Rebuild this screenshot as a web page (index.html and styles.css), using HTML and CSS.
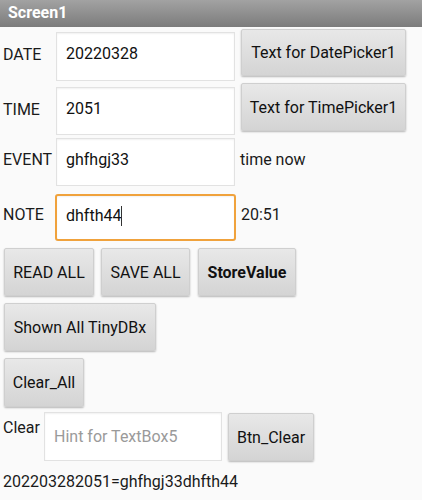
FILE: index.html
```html
<!DOCTYPE html>
<html>
<head>
<meta charset="utf-8">
<link rel="stylesheet" href="styles.css">
</head>
<body>
<div class="titlebar">Screen1</div>
<div class="screen">
  <div class="row row-date">
    <div class="label">DATE</div>
    <div class="textbox">20220328</div>
    <div class="button btn-picker">Text for DatePicker1</div>
  </div>
  <div class="row row-time">
    <div class="label">TIME</div>
    <div class="textbox">2051</div>
    <div class="button btn-picker">Text for TimePicker1</div>
  </div>
  <div class="row row-event">
    <div class="label">EVENT</div>
    <div class="textbox">ghfhgj33</div>
    <div class="side">time now</div>
  </div>
  <div class="row row-note">
    <div class="label">NOTE</div>
    <div class="textbox focused">dhfth44<span class="caret"></span></div>
    <div class="side">20:51</div>
  </div>
  <div class="row row-actions">
    <div class="button btn-read">READ ALL</div>
    <div class="button btn-save">SAVE ALL</div>
    <div class="button btn-store">StoreValue</div>
  </div>
  <div class="row row-single">
    <div class="button btn-shown">Shown All TinyDBx</div>
  </div>
  <div class="row row-single">
    <div class="button btn-clearall">Clear_All</div>
  </div>
  <div class="row row-clear">
    <div class="label small">Clear</div>
    <div class="textbox hint">Hint for TextBox5</div>
    <div class="button btn-clear">Btn_Clear</div>
  </div>
  <div class="result">202203282051=ghfhgj33dhfth44</div>
</div>
</body>
</html>
```
FILE: styles.css
```css
html, body {
  margin: 0;
  padding: 0;
  background: #fafafa;
}
body {
  width: 422px;
  height: 500px;
  overflow: hidden;
  font-family: Roboto, "Noto Sans", sans-serif;
  font-size: 16px;
  color: #1a1a1a;
}
.titlebar {
  height: 27px;
  box-sizing: border-box;
  padding: 3px 0 0 8px;
  background: linear-gradient(#a2a2a2, #7c7c7c);
  color: #fff;
  font-weight: bold;
  font-size: 16px;
  line-height: 20px;
}
.row {
  display: flex;
  align-items: flex-start;
}
.label {
  width: 53px;
  padding-left: 3px;
  flex: none;
  line-height: 20px;
}
.textbox {
  flex: none;
  width: 179px;
  height: 48px;
  box-sizing: border-box;
  background: #fff;
  border: 1px solid #e2e2e2;
  box-shadow: inset 0 1px 2px rgba(0,0,0,0.06);
  padding: 11px 0 0 9px;
  line-height: 20px;
  color: #111;
}
.textbox.focused {
  border: 2px solid #f0a23c;
  border-radius: 3px;
  width: 181px;
  margin-left: -1px;
  padding: 10px 0 0 9px;
}
.caret {
  display: inline-block;
  width: 1px;
  height: 20px;
  background: #333;
  vertical-align: top;
}
.textbox.hint {
  color: #9a9a9a;
}
.side {
  margin-left: 5px;
  line-height: 20px;
}
.button {
  flex: none;
  box-sizing: border-box;
  height: 47px;
  display: flex;
  align-items: center;
  justify-content: center;
  background: linear-gradient(#e8e8e8, #d4d4d4);
  border: 1px solid #cfcfcf;
  border-radius: 2px;
  box-shadow: 0 1px 2px rgba(0,0,0,0.28);
  color: #111;
  white-space: nowrap;
}
.btn-picker {
  width: 165px;
  margin-left: 6px;
}

.row-date { height: 56px; }
.row-date .label { margin-top: 18px; }
.row-date .textbox { margin-top: 5px; height: 49px; }
.row-date .button { margin-top: 2px; }

.row-time { height: 52px; }
.row-time .label { margin-top: 17px; }
.row-time .textbox { margin-top: 4px; }
.row-time .button { margin-top: 0; height: 48px; }

.row-event { height: 52px; }
.row-event .label { margin-top: 15px; }
.row-event .textbox { margin-top: 3px; }
.row-event .side { margin-top: 15px; }

.row-note { height: 55px; }
.row-note .label { margin-top: 18px; }
.row-note .textbox { margin-top: 7px; height: 47px; }
.row-note .side { margin-top: 18px; }

.row-actions {
  padding-left: 4px;
  gap: 7px;
  margin-top: 6px;
}
.row-actions .button { height: 48px; }
.btn-read { width: 90px; }
.btn-save { width: 89px; }
.btn-store { width: 98px; font-weight: bold; margin-left: 1px; }

.row-single {
  padding-left: 4px;
  margin-top: 7px;
}
.row-single .button { height: 48px; }
.btn-shown { width: 152px; }
.btn-clearall { width: 80px; height: 49px !important; }

.row-clear {
  margin-top: 5px;
  height: 54px;
}
.label.small {
  width: 41px;
  margin-top: 6px;
}
.row-clear .textbox {
  width: 178px;
  height: 49px;
  padding-top: 14px;
}
.btn-clear {
  width: 86px;
  height: 48px;
  margin-left: 6px;
  margin-top: 1px;
}
.result {
  padding-left: 3px;
  margin-top: 6px;
  line-height: 20px;
}
```
